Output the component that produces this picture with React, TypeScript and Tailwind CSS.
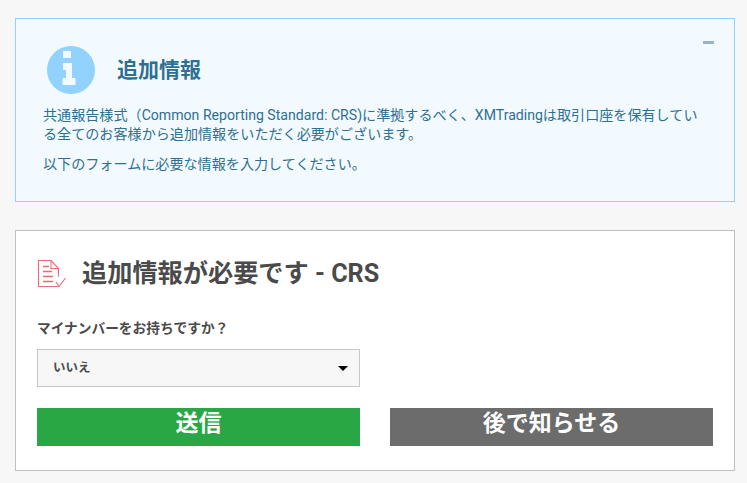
function InfoIcon() {
  return (
    <svg width="48" height="48" viewBox="0 0 48 48" className="shrink-0">
      <circle cx="24" cy="24" r="24" fill="#91d2ff" />
      <path d="M16 5h8v7h-8zM16 17h9v15h3.500v7H15.500v-7h3.500v-8h-3z" fill="#f2faff" />
    </svg>
  );
}

function DocIcon() {
  return (
    <svg width="30" height="30" viewBox="0 0 30 30" fill="none" stroke="#ee6a72" strokeWidth="1.100" className="shrink-0">
      <path d="M21.500 27.500H1.500V1.500h12.500l7.500 8v8" />
      <path d="M14 1.500v8h7.500" />
      <path d="M6 7.500h6M6 12.500h9M6 17.500h10M6 22.500h10" strokeWidth="1.300" />
      <path d="M19 23l3 4.500 6.500-8.500" />
    </svg>
  );
}

export default function App() {
  return (
    <div
      className="min-h-screen bg-[#f7f7f7] pt-[18px] px-[15px] pb-3"
      style={{ fontFamily: 'Roboto, "Noto Sans CJK JP", sans-serif' }}
    >
      <div className="relative h-[184px] w-[720px] border border-[#91d2ff] bg-[#f2faff] pl-[27px] pt-[27px] text-[#2f6f91]">
        <button className="absolute right-[20px] top-[22px] h-[3px] w-[11px] bg-[#96b6c8]" aria-label="collapse" />
        <div className="flex items-center gap-[22px] pl-[4px]">
          <InfoIcon />
          <h2 className="text-[21px] leading-none font-bold">追加情報</h2>
        </div>
        <p className="mt-[12px] w-[660px] text-[14.100px] leading-[19px]">
          共通報告様式（Common Reporting Standard: CRS)に準拠するべく、XMTradingは取引口座を保有している全てのお客様から追加情報をいただく必要がございます。
        </p>
        <p className="mt-[11px] text-[14.100px] leading-[19px]">以下のフォームに必要な情報を入力してください。</p>
      </div>

      <div className="mt-[28px] h-[241px] w-[720px] border border-[#c0c0c0] bg-white pl-[21px] pr-[21px] pt-[27px]">
        <div className="flex items-center gap-[15px]">
          <DocIcon />
          <h1 className="text-[25.200px] leading-[32px] font-bold text-[#4a4a4a]">追加情報が必要です - CRS</h1>
        </div>
        <label className="mt-[28px] block text-[13.700px] leading-[20px] font-bold text-[#4a4a4a]">マイナンバーをお持ちですか？</label>
        <div className="mt-[11px] flex h-[38px] w-[323px] items-center justify-between border border-[#c8c8c8] bg-[#f7f7f7] pl-[15px] pr-[11px] text-[12.500px] font-bold text-[#4a4a4a]">
          <span>いいえ</span>
          <span className="h-0 w-0 border-x-[5px] border-t-[5px] border-x-transparent border-t-black" />
        </div>
        <div className="mt-[21px] flex gap-[30px]">
          <button className="h-[38px] w-[323px] bg-[#2aa745] pb-[6px] text-[23px] leading-[26px] font-bold text-white">送信</button>
          <button className="h-[38px] w-[323px] bg-[#6c6c6c] pb-[6px] text-[23px] leading-[26px] font-bold text-white">後で知らせる</button>
        </div>
      </div>
    </div>
  );
}
